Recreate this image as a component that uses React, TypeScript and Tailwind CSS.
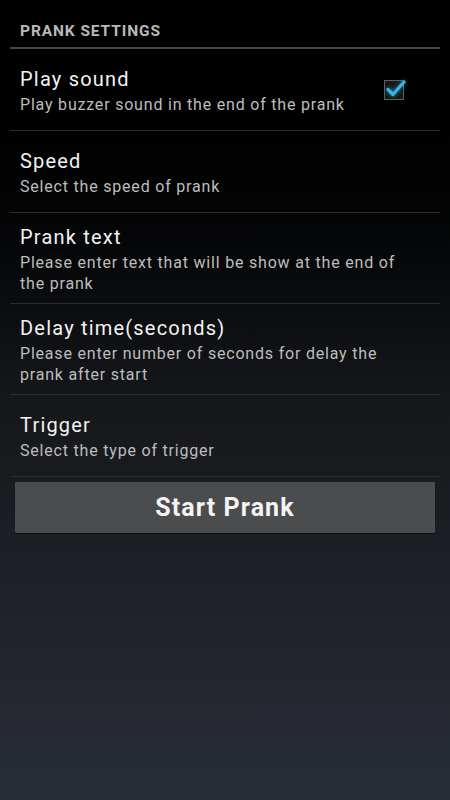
import React from 'react';

interface PrefProps {
  title: string;
  summary: string;
  checked?: boolean;
}

const CheckBox = () => (
  <div className="relative w-[20px] h-[20px] mr-[36px] border border-[#5d5d5d] bg-[#161819]">
    <svg
      className="absolute -left-[2px] -top-[5px]"
      width="26"
      height="24"
      viewBox="0 0 26 24"
      fill="none"
    >
      <path
        d="M5 13.5 L10 18.5 L21 6"
        stroke="#33b5e5"
        strokeWidth="3.2"
        strokeLinecap="round"
        strokeLinejoin="round"
        style={{ filter: 'drop-shadow(0 0 2px rgba(51,181,229,0.7))' }}
      />
    </svg>
  </div>
);

const Preference = ({ title, summary, checked }: PrefProps) => (
  <div className="flex items-center min-h-[82px] py-[9px] pl-[10px] border-b border-[#2c2d2f]">
    <div className="w-[376px] flex flex-col">
      <span className="text-[20px] leading-[30px] tracking-[1.2px] text-[#f2f2f2]">{title}</span>
      <span className="text-[16px] leading-[21px] tracking-[0.8px] text-[#bdbdbd]">{summary}</span>
    </div>
    {checked !== undefined && (
      <div className="flex-1 flex justify-end">
        <CheckBox />
      </div>
    )}
  </div>
);

export default function App() {
  return (
    <div
      className="w-[450px] h-[800px] bg-gradient-to-b from-[#000000] via-[#15171a] to-[#292d36]"
      style={{ fontFamily: 'Roboto, "Noto Sans", sans-serif' }}
    >
      <div className="px-[10px] pt-[22px]">
        <div className="pl-[10px] pb-[6px] text-[15.5px] leading-[19px] font-bold text-[#b8b8b8] tracking-[0.9px]">
          PRANK SETTINGS
        </div>
        <div className="h-[2px] bg-[#454545]" />
        <Preference title="Play sound" summary="Play buzzer sound in the end of the prank" checked />
        <Preference title="Speed" summary="Select the speed of prank" />
        <Preference title="Prank text" summary="Please enter text that will be show at the end of the prank" />
        <Preference title="Delay time(seconds)" summary="Please enter number of seconds for delay the prank after start" />
        <Preference title="Trigger" summary="Select the type of trigger" />
      </div>
      <div className="px-[15px] pt-[5px]">
        <button className="w-full h-[51px] bg-[#4b4c4e] text-[#f4f4f4] text-[25px] tracking-[1.1px] font-bold rounded-[1px] shadow-[0_1px_1px_rgba(0,0,0,0.6)]">
          Start Prank
        </button>
      </div>
    </div>
  );
}
